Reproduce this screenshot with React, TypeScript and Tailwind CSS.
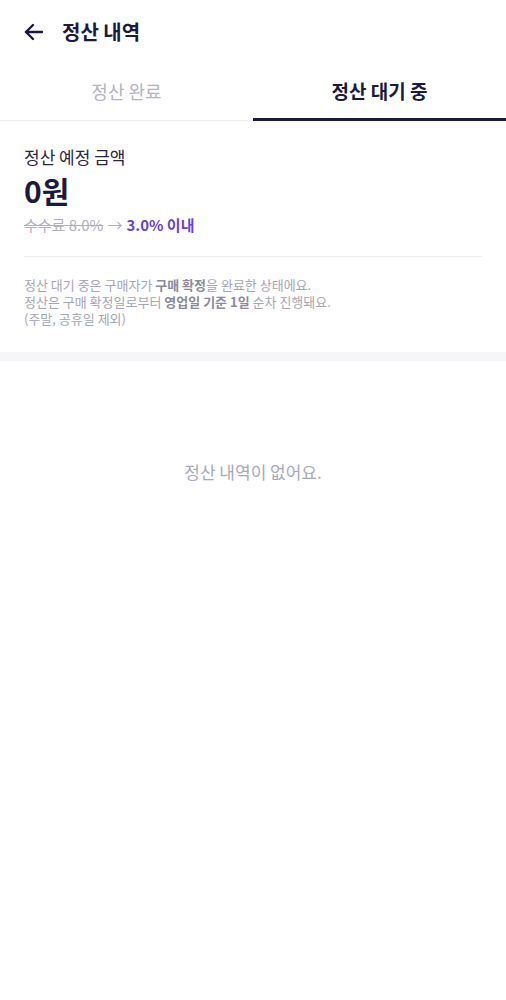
import React from "react";

export default function App() {
  return (
    <div
      className="w-[506px] min-h-[1000px] bg-white text-[#1c1a3b]"
      style={{ fontFamily: '"Noto Sans CJK KR", "Noto Sans", sans-serif' }}
    >
      <header className="h-[64px] flex items-center px-[22px] gap-[16px]">
        <svg width="24" height="24" viewBox="0 0 24 24" fill="none" stroke="#1c1a3b" strokeWidth="2.4" strokeLinecap="round" strokeLinejoin="round">
          <path d="M20 12H4" />
          <path d="M11 5l-7 7 7 7" />
        </svg>
        <h1 className="text-[20px] font-bold leading-none">정산 내역</h1>
      </header>
      <div className="flex h-[57px] border-b border-[#eeeef2]">
        <div className="flex-1 flex items-center justify-center text-[18px] text-[#b3b3c2] pb-[2px]">정산 완료</div>
        <div className="flex-1 flex items-center justify-center text-[19px] font-bold text-[#1c1a3b] border-b-[3px] border-[#1c1a3b] -mb-px pt-[1px]">정산 대기 중</div>
      </div>
      <section className="px-[24px] pt-[24px]">
        <div className="text-[17px] leading-[24px] text-[#2a2840]">정산 예정 금액</div>
        <div className="text-[30px] font-bold leading-[40px] mt-[1px] text-[#1c1a3b]">0원</div>
        <div className="text-[15px] leading-[22px] mt-[4px] flex items-center gap-[4px]">
          <span className="text-[#b0b0be] line-through">수수료 8.0%</span>
          <span className="text-[#b0b0be]">→</span>
          <span className="text-[#6b3fd8] font-bold">3.0% 이내</span>
        </div>
        <div className="h-px bg-[#eeeef2] mt-[20px]" />
        <div className="pt-[19px] pb-[25px] text-[13px] leading-[17px] text-[#a6a6b3]">
          <p>정산 대기 중은 구매자가 <b className="font-bold text-[#8a8a98]">구매 확정</b>을 완료한 상태에요.</p>
          <p>정산은 구매 확정일로부터 <b className="font-bold text-[#8a8a98]">영업일 기준 1일</b> 순차 진행돼요.</p>
          <p>(주말, 공휴일 제외)</p>
        </div>
      </section>
      <div className="h-[9px] bg-[#f6f6f8]" />
      <div className="pt-[98px] text-center text-[17px] text-[#a9a9b8]">정산 내역이 없어요.</div>
    </div>
  );
}
